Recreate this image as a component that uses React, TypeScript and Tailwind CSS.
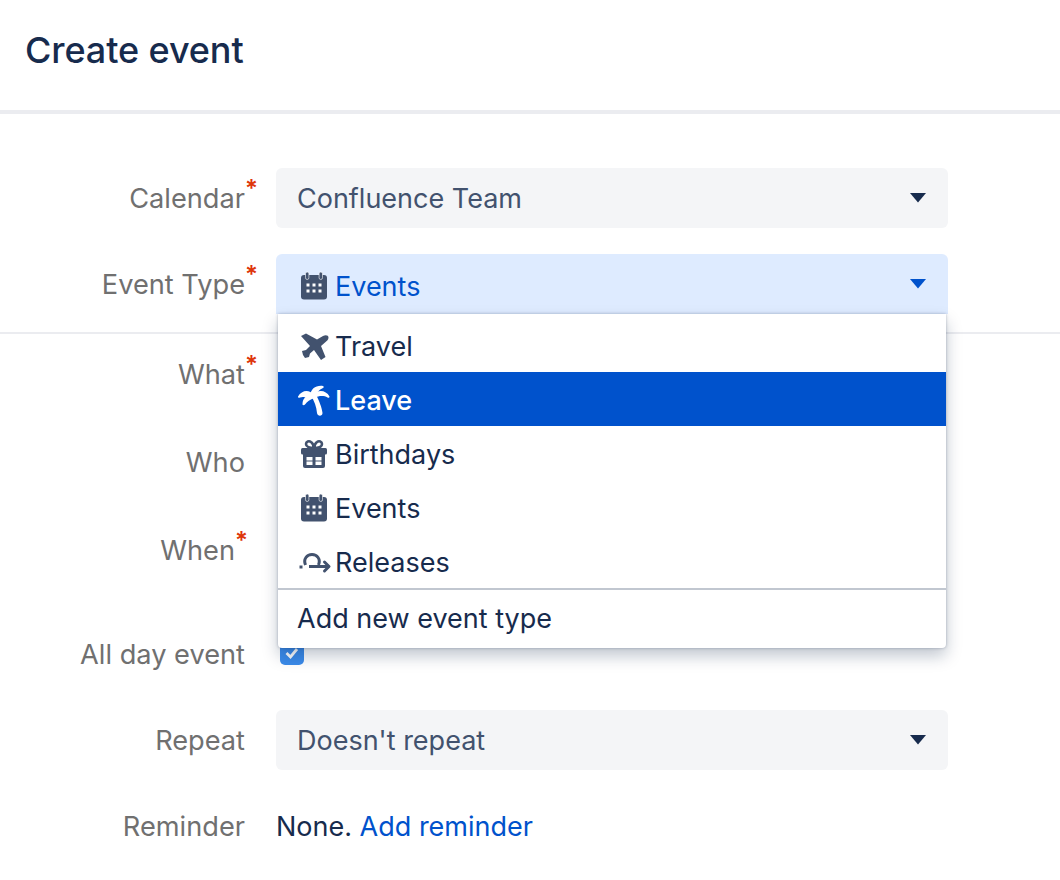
const font = { fontFamily: "Inter, 'Noto Sans', sans-serif" };

function CalendarIcon() {
  return (
    <svg width="40" height="36" viewBox="0 0 40 36" fill="none" className="-mr-[1px] shrink-0">
      <rect x="5" y="7" width="26" height="24.5" rx="3" fill="#42526E" />
      <rect x="9.5" y="4" width="3.4" height="7.5" rx="1.7" fill="#42526E" stroke="#fff" strokeOpacity="0.6" />
      <rect x="23.1" y="4" width="3.4" height="7.5" rx="1.7" fill="#42526E" stroke="#fff" strokeOpacity="0.6" />
      <g fill="#fff">
        <rect x="10.5" y="15.5" width="3" height="3" />
        <rect x="16.5" y="15.5" width="3" height="3" />
        <rect x="22.5" y="15.5" width="3" height="3" />
        <rect x="10.5" y="21.5" width="3" height="3" />
        <rect x="16.5" y="21.5" width="3" height="3" />
        <rect x="22.5" y="21.5" width="3" height="3" />
      </g>
    </svg>
  );
}

function PlaneIcon() {
  return (
    <svg width="40" height="36" viewBox="0 0 40 36" fill="#42526E" className="-mr-[1px] shrink-0">
      <path d="M5 8 L10 5.5 L21 11.5 L27 8 C30 6.5 32.5 7.5 32.5 9.5 C32.5 11.5 31 13 29 14.5 L25 18 L29.5 29 L25 32 L18 22 L14 25.5 L13 29 L9 30 L7 27 L6 23 L10 22 L14 18 Z" />
    </svg>
  );
}

function PalmIcon() {
  return (
    <svg width="40" height="36" viewBox="0 0 40 36" fill="#fff" className="-mr-[1px] shrink-0">
      <path d="M14.5 13 L19.5 12 C23 18 26 26 26.5 31 C26.5 34.5 21.5 34.5 21 31 C20.5 25 18.5 19 14.5 13 Z" />
      <path d="M18 13 C13 7 6 8 2 14.5 C2 16 3 16 4 15.5 C7 14.5 9 15 11 16.5 Z" />
      <path d="M17 12 C11 13 6.5 16 6.5 22 C6.5 23.5 8 23.5 9 22.5 C11 19.5 14 17.5 18.5 16 Z" />
      <path d="M14.5 13 C14.5 7 20 3 27 4 C28 4.5 28 5.5 27 6 C23 7.5 20.5 11 19 15 Z" />
      <path d="M16 13 C22 7 30 8 33.5 14.5 C33.5 16 32.5 16 31.5 15.5 C28 13.5 23 13.5 18.5 16 Z" />
    </svg>
  );
}

function GiftIcon() {
  return (
    <svg width="40" height="36" viewBox="0 0 40 36" fill="none" className="-mr-[1px] shrink-0">
      <path d="M18 12 C13 12 10 10.5 10 8 C10 5.5 13 4.5 15 6 C16.5 7 17.5 9 18 12 C18.5 9 19.5 7 21 6 C23 4.5 26 5.5 26 8 C26 10.5 23 12 18 12 Z" stroke="#42526E" strokeWidth="2.6" />
      <rect x="5" y="12" width="26" height="6.5" rx="1.5" fill="#42526E" />
      <path d="M7 18 H29 V30 A2 2 0 0 1 27 32 H9 A2 2 0 0 1 7 30 Z" fill="#42526E" />
      <rect x="10.5" y="21" width="6" height="3.5" fill="#fff" />
      <rect x="19.5" y="21" width="6" height="3.5" fill="#fff" />
      <rect x="10.5" y="25.5" width="6" height="3.5" fill="#fff" />
      <rect x="19.5" y="25.5" width="6" height="3.5" fill="#fff" />
    </svg>
  );
}

function ReleasesIcon() {
  return (
    <svg width="40" height="36" viewBox="0 0 40 36" fill="none" stroke="#42526E" className="-mr-[1px] shrink-0">
      <path d="M9.5 21 C7 15 11 10.5 16 10.5 C21 10.5 25 15 22.5 21" strokeWidth="3" />
      <path d="M13 22.5 H32" strokeWidth="3" />
      <path d="M28.5 18 L33 22.5 L28.5 27" strokeWidth="3" strokeLinecap="round" strokeLinejoin="round" />
      <path d="M3.5 23 H6.5" strokeWidth="3" />
    </svg>
  );
}

function Caret({ color }: { color: string }) {
  return (
    <svg width="16" height="10" viewBox="0 0 16 10" className="shrink-0">
      <path d="M0 0 H16 L8 9.5 Z" fill={color} />
    </svg>
  );
}

function Label({ text, required, inset }: { text: string; required?: boolean; inset?: boolean }) {
  return (
    <div className={`w-[245px] shrink-0 pt-[2px] text-right text-[27.2px] leading-[36px] text-[#707070] ${inset ? "pr-[10px]" : ""}`}>
      <span className="relative">
        {text}
        {required && (
          <span className="absolute left-full top-[-7px] text-[24px] leading-[28px] font-semibold text-[#DE350B]">
            *
          </span>
        )}
      </span>
    </div>
  );
}

function Row({ label, required, inset, className, children }: { label: string; required?: boolean; inset?: boolean; className: string; children?: React.ReactNode }) {
  return (
    <div className={`flex h-[60px] items-center ${className}`}>
      <Label text={label} required={required} inset={inset} />
      <div className="ml-[31px] flex w-[672px] items-center">{children}</div>
    </div>
  );
}

function Select({ text }: { text: string }) {
  return (
    <div className="flex h-[60px] w-full items-center justify-between rounded-[6px] bg-[#F4F5F7] pl-[21px] pr-[22px] text-[27px] text-[#42526E]">
      <span className="pt-[2px]">{text}</span>
      <Caret color="#172B4D" />
    </div>
  );
}

const items = [
  { name: "Travel", icon: <PlaneIcon /> },
  { name: "Leave", icon: <PalmIcon />, active: true },
  { name: "Birthdays", icon: <GiftIcon /> },
  { name: "Events", icon: <CalendarIcon /> },
  { name: "Releases", icon: <ReleasesIcon /> },
];

export default function App() {
  return (
    <div style={font} className="h-[880px] w-[1060px] overflow-hidden bg-white">
      {/* Header */}
      <div className="flex h-[114px] items-start border-b-4 border-[#EBECF0] pl-[25px] pt-[27px]">
        <h1 className="text-[36px] leading-[46px] font-medium tracking-[-0.1px] text-[#172B4D]">Create event</h1>
      </div>

      <Row label="Calendar" required className="mt-[54px]">
        <Select text="Confluence Team" />
      </Row>

      {/* Event type with its open menu */}
      <div className="mt-[26px] h-[80px] border-b-2 border-[#EBECF0]">
        <div className="flex h-[60px] items-center">
          <Label text="Event Type" required />
          <div className="relative ml-[31px] w-[672px]">
            <div className="flex h-[60px] items-center justify-between rounded-t-[6px] bg-[#DEEBFF] pr-[22px] pl-[20px] text-[27px] text-[#0052CC]">
              <span className="flex items-center pt-[4px]">
                <CalendarIcon />
                <span className="pt-[2px]">Events</span>
              </span>
              <Caret color="#0052CC" />
            </div>

            <div className="absolute top-[60px] left-[2px] z-10 w-[668px] rounded-b-[4px] bg-white pt-[4px] text-[27px] text-[#172B4D] shadow-[0_8px_16px_rgba(9,30,66,0.25),0_0_3px_rgba(9,30,66,0.31)]">
              {items.map((item) => (
                <div
                  key={item.name}
                  className={`flex h-[54px] items-center pl-[18px] ${item.active ? "bg-[#0052CC] font-medium text-white" : ""}`}
                >
                  <span className="flex items-center pt-[2px]">
                    {item.icon}
                    <span className="pt-[2px]">{item.name}</span>
                  </span>
                </div>
              ))}
              <div className="flex h-[60px] items-center border-t-2 border-[#C1C7D0] pl-[19px]">Add new event type</div>
            </div>
          </div>
        </div>
      </div>

      <Row label="What" required className="mt-[10px]" />
      <Row label="Who" className="mt-[28px]" />
      <Row label="When" required inset className="mt-[28px]" />
      <Row label="All day event" className="mt-[44px]">
        <div className="ml-[4px] flex h-[22px] w-[24px] items-center justify-center rounded-[5px] bg-[#3B8BEA]">
          <svg width="16" height="14" viewBox="0 0 16 14" fill="none">
            <path d="M2.5 6 L6.5 10 L13 2" stroke="#fff" strokeWidth="2.8" />
          </svg>
        </div>
      </Row>
      <Row label="Repeat" className="mt-[26px]">
        <Select text="Doesn't repeat" />
      </Row>
      <Row label="Reminder" className="mt-[26px]">
        <span className="pt-[2px] text-[27px] text-[#172B4D]">
          None. <span className="text-[#0052CC]">Add reminder</span>
        </span>
      </Row>
    </div>
  );
}
